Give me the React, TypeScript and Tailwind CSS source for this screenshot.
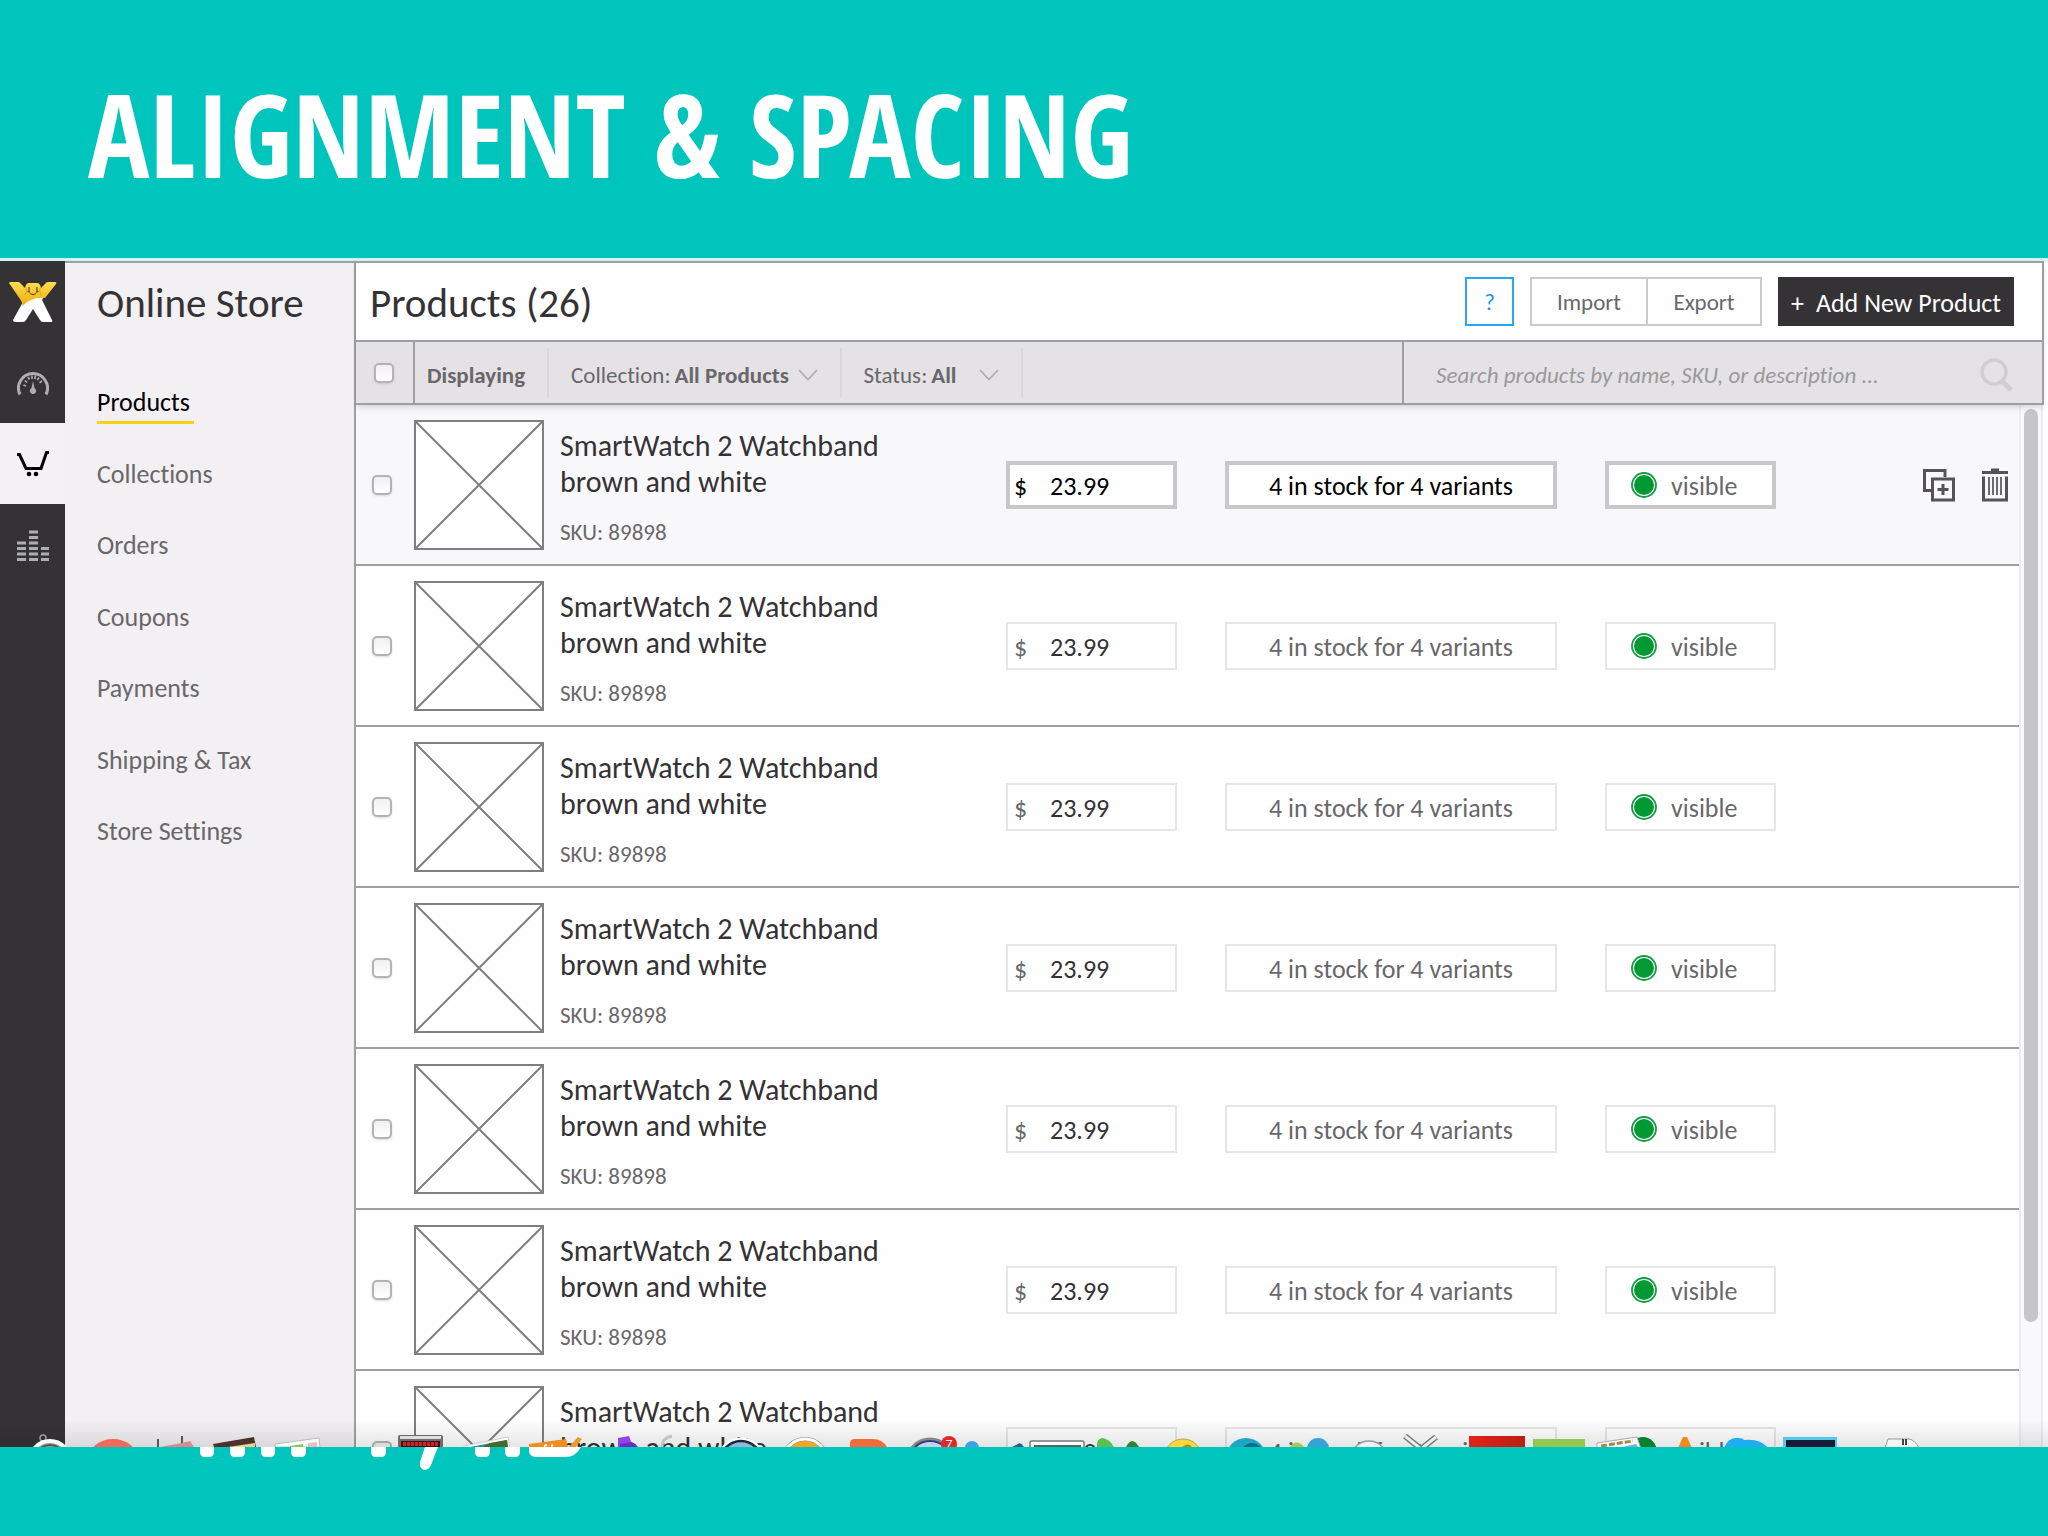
import React from 'react';

interface Product {
  id: number;
  name: string;
  sku: string;
  price: string;
  stock: string;
  active?: boolean;
}

const navItems = ['Products', 'Collections', 'Orders', 'Coupons', 'Payments', 'Shipping & Tax', 'Store Settings'];

const products: Product[] = Array.from({ length: 7 }, (_, i) => ({
  id: i + 1,
  name: 'SmartWatch 2 Watchband brown and white',
  sku: '89898',
  price: '23.99',
  stock: '4 in stock for 4 variants',
  active: i === 0,
}));

const LogoIcon = () => (
  <svg className="w-12 h-10" viewBox="0 0 48 40">
    <defs>
      <linearGradient id="logoYellow" x1="0" y1="0" x2="0" y2="1">
        <stop offset="0" stopColor="#ffdf4f" />
        <stop offset="1" stopColor="#f1a90f" />
      </linearGradient>
    </defs>
    <path d="M14 20 L4 38 Q4 40 6 40 H14 Q16 40 17 38 L24 27 L31 38 Q32 40 34 40 H42 Q44 40 43 38 L33 18 L36 12 Z" fill="#fff" />
    <path d="M0 1 Q0 0 2 0 H9 Q11 0 12 2 L16 6 Q17 1 20 1 H28 Q31 1 32 6 L36 2 Q37 0 39 0 H46 Q48 0 47 2 L36 16 Q28 15 22 18 Q17 20 14 24 Q13 20 11 17 Z" fill="url(#logoYellow)" />
    <path d="M17 6 Q18 10 16 13M31 6 Q30 10 32 13" stroke="#e2a21c" strokeWidth="1" fill="none" />
    <path d="M20 5v4M28 5v4M18.500 9.500l2.500 .5M27 10l2.500-.5M21 11.500q3 2 6 0" stroke="#6d5220" strokeWidth="1.300" fill="none" />
  </svg>
);

const GaugeIcon = () => (
  <svg className="w-8 h-8" viewBox="0 0 32 32" fill="none" stroke="#aeadb0">
    <path d="M3 27.500 A14.500 14.500 0 1 1 29 27.500" strokeWidth="3" />
    <path d="M6.500 18l2.500 1M8 13.500l2 2M11 10l1.500 2.500M15 8.500v3.500M18.500 8.500l-.7 3.500M22 10.500l-1.700 2.500M25 14l-2.500 1.700" strokeWidth="1.700" />
    <path d="M16 14l1.500 7a3.200 3.200 0 1 1-3 0z" fill="#aeadb0" stroke="none" />
  </svg>
);

const CartIcon = () => (
  <svg className="w-8 h-8" viewBox="0 0 32 32" fill="none" stroke="#000">
    <path d="M0 6.500H2.500L9 20.500H24L29.500 4.500H32" strokeWidth="3" />
    <circle cx="12" cy="26" r="2.300" fill="#000" stroke="none" />
    <circle cx="19" cy="26" r="2.300" fill="#000" stroke="none" />
  </svg>
);

const BarsIcon = () => (
  <svg className="w-8 h-8" viewBox="0 0 32 32" stroke="#aeadb0" strokeWidth="3">
    <path d="M0 30.500h9M0 25h9M0 19.500h9M0 14h9M12 30.500h9M12 25h9M12 19.500h9M12 14h9M12 8.500h9M12 3h9M24 30.500h8M24 25h8M24 19.500h8" />
  </svg>
);

const railIcons = [
  { label: 'Home', icon: <LogoIcon /> },
  { label: 'Dashboard', icon: <GaugeIcon /> },
  { label: 'Store', icon: <CartIcon />, active: true },
  { label: 'Statistics', icon: <BarsIcon /> },
];

const Chevron = () => (
  <svg className="w-5 h-3 ml-auto" viewBox="0 0 20 12" fill="none" stroke="#aeadb0" strokeWidth="1.800">
    <path d="M1 1l9 9.500L19 1" />
  </svg>
);

const Checkbox: React.FC<{ label: string }> = ({ label }) => (
  <input
    type="checkbox"
    aria-label={label}
    className="appearance-none block w-5 h-5 rounded-[5px] border-2 border-[#b3b2b5] bg-linear-to-b from-[#f0f0f1] to-white shadow-sm checked:bg-[#353235]"
  />
);

const FilterSelect: React.FC<{ id: string; label: string; value: string }> = ({ id, label, value }) => (
  <div className="flex items-center h-[50px] min-w-[181px] border-r-2 border-[#dad8dc] pt-1 pl-[22px] pr-[22px]">
    <label htmlFor={id}>{label}:</label>
    <select id={id} className="appearance-none font-bold ml-1 mr-2 outline-none">
      <option>{value}</option>
    </select>
    <Chevron />
  </div>
);

const ProductRow: React.FC<{ product: Product }> = ({ product }) => {
  const { id, name, sku, price, stock, active } = product;
  const box = active
    ? 'border-2 border-[#c8c7ca] shadow-[inset_0_0_0_2px_#c8c7ca]'
    : 'border-2 border-[#e6e5e8]';
  return (
    <li className={`flex items-center h-[161px] border-b-2 border-[#9f9ea1] ${active ? 'bg-[#f8f7fa]' : 'bg-[#fefefe]'}`}>
      <div className="w-[58px] pl-4 shrink-0">
        <Checkbox label={`Select product ${id}`} />
      </div>
      <svg className="w-[130px] h-[130px] shrink-0" viewBox="0 0 130 130" fill="#fff" stroke="#7f7e81" strokeWidth="2">
        <rect x="1" y="1" width="128" height="128" />
        <path d="M1 1l128 128M129 1L1 129" />
      </svg>
      <div className="flex-1 min-w-0 pt-1 pl-4">
        <h3 className="max-w-[340px] text-[30px] leading-9 text-[#353235]">{name}</h3>
        <p className="mt-[18px] text-[23px] leading-7">SKU: {sku}</p>
      </div>
      <label className={`flex items-center w-[171px] h-12 pt-0.5 bg-white ${box} ${active ? 'text-black' : ''}`}>
        <span className="w-[42px] pl-1.5">$</span>
        <input
          aria-label={`Price of product ${id}`}
          defaultValue={price}
          className={`flex-1 min-w-0 mr-1 outline-none ${active ? 'text-black' : 'text-[#353235]'}`}
        />
      </label>
      <button className={`w-[332px] h-12 ml-12 pt-0.5 bg-white ${box} ${active ? 'text-black' : ''}`}>{stock}</button>
      <button className={`flex items-center gap-3 w-[171px] h-12 ml-12 pt-0.5 pl-6 bg-white ${box}`}>
        <svg className="w-7 h-7" viewBox="0 0 28 28">
          <circle cx="13" cy="13" r="12" fill="#fff" stroke="#169b41" strokeWidth="1.800" />
          <circle cx="13" cy="13" r="10" fill="#009933" />
        </svg>
        visible
      </button>
      <div className="flex items-center justify-end gap-6 w-[243px] pr-2.5">
        {active && (
          <>
            <button aria-label="Duplicate product">
              <svg className="w-9 h-9" viewBox="0 0 36 36" fill="none" stroke="#555356" strokeWidth="3">
                <path d="M10 23.500H3.500V3.500H24V10" />
                <rect x="11.500" y="12" width="21" height="21" />
                <path d="M22 17v11M16.500 22.500h11" />
              </svg>
            </button>
            <button aria-label="Delete product">
              <svg className="w-7 h-9" viewBox="0 0 28 36" fill="none" stroke="#555356" strokeWidth="3">
                <path d="M1 5.500h26M10 3h8" />
                <path d="M2.500 9.500V33H25.500V9.500" />
                <path d="M8 10v18M12 10v18M16 10v18M20 10v18" strokeWidth="1.700" />
              </svg>
            </button>
          </>
        )}
      </div>
    </li>
  );
};

// Tops of the dock icons peeking over the bottom band, plus the ends of the hidden caption
const DockStrip = () => (
  <svg className="absolute left-0 -top-[27px] w-[2048px] h-[52px] pointer-events-none" viewBox="0 1420 2048 52">
    <defs>
      <clipPath id="dockClip">
        <rect x="0" y="1420" width="2048" height="27" />
      </clipPath>
      <linearGradient id="red" x1="0" x2="1">
        <stop offset="0" stopColor="#e2231a" />
        <stop offset="1" stopColor="#b81f14" />
      </linearGradient>
    </defs>
    <g clipPath="url(#dockClip)">
      <circle cx="-14" cy="1462" r="19" fill="#777" stroke="#fff" strokeWidth="3" />
      <circle cx="43" cy="1438" r="3" fill="none" stroke="#999" strokeWidth="1.500" />
      <circle cx="50" cy="1461" r="20" fill="#9fa19f" stroke="#fff" strokeWidth="4" />
      <circle cx="50" cy="1461" r="16" fill="none" stroke="#555" strokeWidth="2" />
      <ellipse cx="113" cy="1458" rx="24" ry="19" fill="#ee6a5c" />
      <path d="M158 1447v-8M182 1447v-11" stroke="#555" strokeWidth="2" />
      <path d="M160 1447l22-4 8-2 4 6z" fill="#d98b8b" />
      <path d="M213 1444l41-7 2 10h-42z" fill="#4f302e" />
      <path d="M228 1447l27-4v4z" fill="#e6d48e" />
      <path d="M275 1447v-3l44-6 1 9z" fill="#fff" stroke="#bbb" />
      <path d="M290 1446l13-2v3h-13z" fill="#83c95b" />
      <path d="M308 1443l9-1v5h-9z" fill="#eebcbc" />
      <rect x="398" y="1435" width="45" height="14" rx="2" fill="#6d6b6c" />
      <rect x="400" y="1436" width="41" height="3" fill="#ddd" />
      <rect x="401" y="1441" width="39" height="8" fill="#3c0c0e" />
      <path d="M403 1444h36" stroke="#d5202a" strokeWidth="4" strokeDasharray="3 1" />
      <path d="M464 1446l44-9 2 12h-46z" fill="#fff" stroke="#ccc" />
      <path d="M470 1447l37-7 1 8z" fill="#2292b8" />
      <path d="M482 1447l8-4 17-3 1 8z" fill="#46682c" />
      <path d="M529 1444l37-5 2 9h-39z" fill="#f08e22" />
      <path d="M544 1446l3-1M551 1446l2-1" stroke="#fff" strokeWidth="2" />
      <path d="M568 1448l10-11 4 2-7 9z" fill="#e99a2b" />
      <path d="M618 1438l11-2 4 11h-15z" fill="#9343e8" />
      <path d="M620 1444l12-2 6 5h-18z" fill="#6b2cc2" />
      <path d="M662 1447q0-9 10-11" stroke="#c4c4c4" strokeWidth="3" fill="none" />
      <circle cx="741" cy="1462" r="23" fill="#8fb8dd" stroke="#fff" strokeWidth="3" />
      <circle cx="741" cy="1462" r="21" fill="none" stroke="#1d2733" strokeWidth="2.500" />
      <circle cx="805" cy="1461" r="22" fill="#f7a51d" stroke="#888" strokeWidth="4" />
      <circle cx="805" cy="1461" r="22" fill="none" stroke="#fff" strokeWidth="3" />
      <path d="M850 1447v-4q0-4 5-4h18q9 0 14 8z" fill="#f26b3c" />
      <circle cx="930" cy="1462" r="23" fill="#bed7f1" stroke="#888" strokeWidth="3" />
      <circle cx="930" cy="1462" r="21" fill="none" stroke="#353d78" strokeWidth="2" />
      <circle cx="949" cy="1444" r="8" fill="#e0272b" />
      <text x="949" y="1448" textAnchor="middle" fontSize="12" fill="#fff" fontFamily="Lato, sans-serif">7</text>
      <circle cx="972" cy="1448" r="7" fill="#3aa3e3" />
      <path d="M1012 1447l8-4 4 4z" fill="#29628a" />
      <rect x="1030" y="1441" width="54" height="14" rx="2" fill="#fff" stroke="#777" strokeWidth="1.500" />
      <rect x="1034" y="1445" width="47" height="10" fill="#4d6661" />
      <path d="M1097 1447q-1-8 5-9 8 1 12 9z" fill="#58c04e" />
      <path d="M1126 1447q6-12 13 0z" fill="#2d8434" />
      <circle cx="1183" cy="1458" r="19" fill="#f8d83c" stroke="#b9a24a" />
      <path d="M1182 1447q6-5 10 0z" fill="#a88d1c" />
      <circle cx="1246" cy="1458" r="20" fill="#1ba7c4" />
      <path d="M1243 1447q9-8 18 0z" fill="#0c6c8d" />
      <path d="M1290 1447q7-9 14 0z" fill="#a9c84a" />
      <circle cx="1318" cy="1449" r="11" fill="#35a2d8" />
      <circle cx="1369" cy="1459" r="18" fill="#eaf3fa" stroke="#999" strokeWidth="1.500" />
      <path d="M1405 1436l16 13M1436 1437l-15 12" stroke="#777" strokeWidth="6" />
      <path d="M1405 1436l16 13M1436 1437l-15 12" stroke="#eee" strokeWidth="3" />
      <rect x="1469" y="1436" width="56" height="12" fill="url(#red)" />
      <rect x="1533" y="1439" width="52" height="10" fill="#92c850" />
      <circle cx="1643" cy="1450" r="13" fill="#0a7f2e" />
      <path d="M1597 1443l40-6 4 12h-44z" fill="#fff" stroke="#aaa" />
      <path d="M1601 1446l32-5" stroke="#a88647" strokeWidth="3" strokeDasharray="6 2" />
      <path d="M1622 1447l14-3 2 3z" fill="#68b4dd" />
      <path d="M1678 1448l5-11h4l5 11z" fill="#f08a20" />
      <path d="M1724 1448q4-11 14-10 5 0 6 2 16-2 24 8z" fill="#1dadf2" />
      <rect x="1783" y="1437" width="54" height="12" fill="#52c9e9" />
      <rect x="1786" y="1440" width="49" height="10" fill="#141a38" />
      <path d="M1885 1448l3-9h21q6 1 10 9z" fill="#f4f4f4" stroke="#999" />
      <path d="M1903 1439v6M1906 1439v6" stroke="#444" strokeWidth="2" />
    </g>
    <g fill="#fff">
      <path d="M200 1447h14v5q0 5-5 5h-4q-5 0-5-5zM230 1447h15v5q0 5-5 5h-5q-5 0-5-5zM261 1447h14v5q0 5-5 5h-4q-5 0-5-5zM291 1447h15v5q0 5-5 5h-5q-5 0-5-5zM371 1447h15v5q0 5-5 5h-5q-5 0-5-5zM475 1447h15v5q0 5-5 5h-5q-5 0-5-5zM505 1447h15v5q0 5-5 5h-5q-5 0-5-5z" />
      <path d="M425 1447h13l-7 18q-2 5-7 5-5-2-4-8z" />
      <path d="M529 1447h52q-5 10-16 10h-30q-6-1-6-6z" />
    </g>
  </svg>
);

export default function App() {
  return (
    <div className="flex flex-col h-screen bg-[#00c5bc] font-['Carlito','Open_Sans',sans-serif] text-[26px] leading-8 text-[#69676a] [font-variant-ligatures:none] overflow-hidden">
      <header className="flex items-center h-[258px] shrink-0 px-[88px] pt-2">
        <h1 className="font-['Open_Sans_Condensed','Roboto_Condensed',sans-serif] font-bold text-[115px] leading-none text-white uppercase">
          Alignment &amp; Spacing
        </h1>
      </header>

      <div className="flex flex-1 min-h-0 border-t-[3px] border-[#d3f3f2] bg-white">
        <nav aria-label="Main" className="w-[65px] shrink-0 bg-[#353235]">
          {railIcons.map((item) => (
            <a
              key={item.label}
              href="#"
              aria-label={item.label}
              className={`flex items-center justify-center h-[81px] ${item.active ? 'bg-[#f3f1f4]' : ''}`}
            >
              {item.icon}
            </a>
          ))}
        </nav>

        {/* Store menu */}
        <aside className="w-[291px] shrink-0 pl-8 bg-[#f2f0f3] border-t-2 border-r-2 border-[#9f9ea1]">
          <h2 className="flex items-center h-20 text-[41px] text-[#353235]">Online Store</h2>
          <ul className="flex flex-col justify-between h-[467px] mt-[43px]">
            {navItems.map((item, i) => (
              <li key={item} className="flex">
                <a
                  href="#"
                  className={`block pr-1 pb-[3px] border-b-[3px] ${i === 0 ? 'border-[#fad019] text-black' : 'border-transparent'}`}
                >
                  {item}
                </a>
              </li>
            ))}
          </ul>
        </aside>

        <main className="flex flex-col flex-1 min-w-0">
          <div className="relative shrink-0 mr-1 border-t-2 border-r-2 border-[#9f9ea1] shadow-md">
            <div className="flex items-center h-[79px] pl-[14px] pr-7 border-b-2 border-[#9f9ea1] bg-[#fefefe]">
              <h2 className="flex-1 pt-0.5 text-[41px] text-[#353235]">Products (26)</h2>
              <button aria-label="Help" className="w-[49px] h-[49px] border-2 border-[#2ba6f2] text-[23px] text-[#1997ee]">?</button>
              <div className="flex ml-4 h-[49px] border-2 border-[#cbcacd] text-[23px]">
                <button className="w-[114px]">Import</button>
                <button className="w-[114px] border-l-2 border-[#cbcacd]">Export</button>
              </div>
              <button className="flex items-center justify-center gap-3 w-[236px] h-[49px] ml-4 pt-0.5 bg-[#353235] text-white">
                <span>+</span>
                <span>Add New Product</span>
              </button>
            </div>

            {/* Filters */}
            <div className="flex items-center h-[63px] border-b-2 border-[#9f9ea1] bg-[#e4e2e5] text-[23px]">
              <div className="flex items-center w-[59px] h-full pl-[18px] border-r-2 border-[#9f9ea1]">
                <Checkbox label="Select all products" />
              </div>
              <div className="flex items-center h-[50px] pt-1 pl-3 pr-[22px] border-r-2 border-[#dad8dc] font-bold">Displaying</div>
              <FilterSelect id="collection" label="Collection" value="All Products" />
              <FilterSelect id="status" label="Status" value="All" />
              <label className="flex items-center w-[640px] h-full ml-auto pt-1 pl-8 pr-7 border-l-2 border-[#9f9ea1]">
                <input
                  type="search"
                  aria-label="Search products"
                  placeholder="Search products by name, SKU, or description ..."
                  className="flex-1 min-w-0 italic outline-none placeholder:text-[#9a999c]"
                />
                <svg className="w-9 h-9" viewBox="0 0 36 36" fill="none" stroke="#cfced1" strokeWidth="3.500">
                  <circle cx="16" cy="15" r="12" />
                  <path d="M24 24l9 9" strokeWidth="5" />
                </svg>
              </label>
            </div>
          </div>

          <div className="flex flex-1 min-h-0 overflow-hidden">
            <ul className="flex-1 min-w-0">
              {products.map((product) => (
                <ProductRow key={product.id} product={product} />
              ))}
            </ul>
            <div className="w-6 mr-[5px] pt-1 border-x-2 border-[#ececee] bg-[#f9f8fa]">
              <div className="w-[14px] h-[88%] mx-auto rounded-full bg-[#c6c5c8]"></div>
            </div>
          </div>
        </main>
      </div>

      <footer className="relative h-[89px] shrink-0 bg-[#00c5bc]">
        <div className="absolute inset-x-0 bottom-full h-7 bg-linear-to-b from-transparent to-black/10"></div>
        <DockStrip />
      </footer>
    </div>
  );
}
